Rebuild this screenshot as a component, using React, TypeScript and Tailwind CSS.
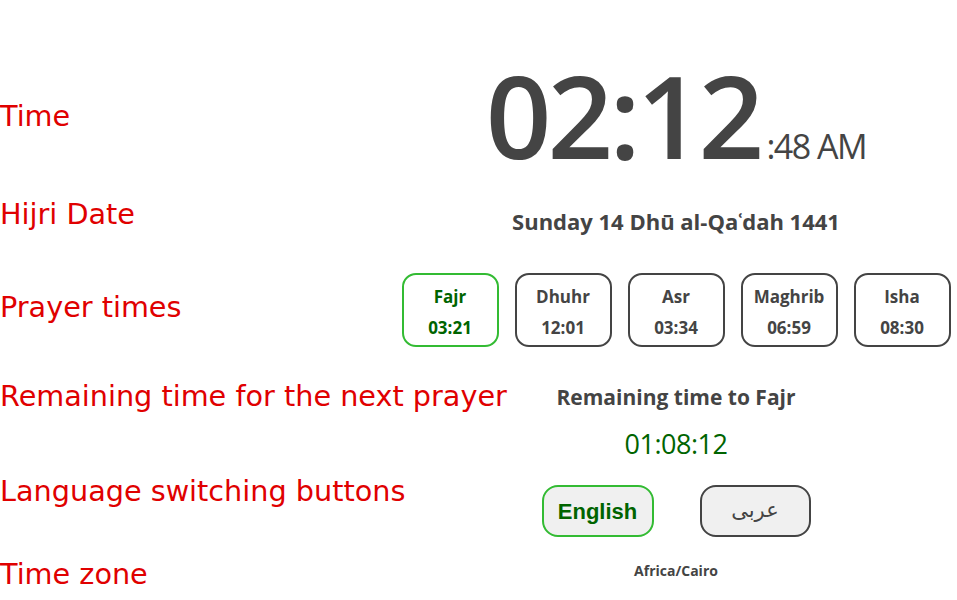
import * as React from "react";

type Prayer = { name: string; time: string; next?: boolean };

const prayers: Prayer[] = [
  { name: "Fajr", time: "03:21", next: true },
  { name: "Dhuhr", time: "12:01" },
  { name: "Asr", time: "03:34" },
  { name: "Maghrib", time: "06:59" },
  { name: "Isha", time: "08:30" },
];

const labelCls = "h-[34px] leading-[34px] whitespace-nowrap text-[28.7px] text-[#e00000]";

function Labels() {
  return (
    <div className="flex flex-col w-[395px] shrink-0 font-['DejaVu_Sans',sans-serif]">
      <div className={`${labelCls} mt-[99px]`}>Time</div>
      <div className={`${labelCls} mt-[64px]`}>Hijri Date</div>
      <div className={`${labelCls} mt-[59px]`}>Prayer times</div>
      <div className={`${labelCls} mt-[55px]`}>Remaining time for the next prayer</div>
      <div className={`${labelCls} mt-[61px]`}>Language switching buttons</div>
      <div className={`${labelCls} mt-[49px]`}>Time zone</div>
    </div>
  );
}

function PrayerBox({ p }: { p: Prayer }) {
  return (
    <div
      className={`w-[97px] h-[74px] rounded-[14px] border-2 flex flex-col items-center font-bold text-[17px] ${
        p.next ? "border-[#33bb33] text-[#006400]" : "border-[#444] text-[#444]"
      }`}
    >
      <div className="mt-[10px] leading-[24px]">{p.name}</div>
      <div className="mt-[7px] leading-[24px]">{p.time}</div>
    </div>
  );
}

export default function App() {
  return (
    <div className="w-full h-[600px] bg-white flex overflow-hidden">
      <Labels />
      <div className="flex-1 flex flex-col items-center text-[#444] font-['Open_Sans','Noto_Sans',sans-serif]">
        <div className="flex items-baseline mt-[50px] h-[130px]">
          <span className="text-[115px] leading-[130px] font-semibold tracking-[-4px]">02:12</span>
          <span className="text-[34px] ml-[6px] tracking-[-1.5px]">:48 AM</span>
        </div>
        <div className="mt-[27px] text-[22px] font-bold leading-[28px]">Sunday 14 Dhū al-Qaʿdah 1441</div>
        <div className="mt-[38px] flex gap-[16px]">
          {prayers.map((p) => (
            <PrayerBox key={p.name} p={p} />
          ))}
        </div>
        <div className="mt-[36px] text-[21px] font-bold leading-[28px]">Remaining time to Fajr</div>
        <div className="mt-[15px] text-[27px] leading-[36px] tracking-[-0.5px] text-[#006400]">01:08:12</div>
        <div className="mt-[23px] flex gap-[46px]">
          <button className="w-[112px] h-[52px] rounded-[16px] border-2 border-[#33bb33] bg-[#f0f0f0] text-[#006400] font-bold text-[22px] font-['Liberation_Sans',Arial,sans-serif]">
            English
          </button>
          <button className="w-[111px] h-[52px] rounded-[16px] border-2 border-[#444] bg-[#f0f0f0] text-[#444] text-[21px] font-['DejaVu_Serif','DejaVu_Sans',serif]">
            عربى
          </button>
        </div>
        <div className="mt-[24px] text-[14px] font-bold leading-[20px]">Africa/Cairo</div>
      </div>
    </div>
  );
}
